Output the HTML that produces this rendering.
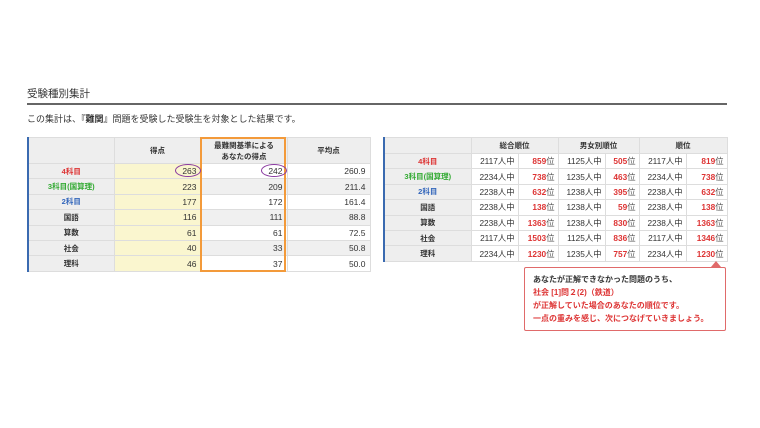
<!DOCTYPE html><html><head><meta charset="utf-8"><style>
*{margin:0;padding:0;box-sizing:border-box}
body{width:760px;height:428px;background:#fff;font-family:"Liberation Sans","Noto Sans CJK JP",sans-serif;color:#333;position:relative;overflow:hidden}
.t{position:absolute;left:27px;top:86px;font-size:10.5px;color:#333}
.ln{position:absolute;left:27px;top:103px;width:700px;height:2px;background:#666}
.s{position:absolute;left:27px;top:112px;font-size:9px}
table{position:absolute;border-collapse:collapse;font-size:8.5px;table-layout:fixed}
td{border:1px solid #ddd;height:15.4px;text-align:right;padding:0 4px}
th{border:1px solid #ddd;background:#eee;font-weight:bold;font-size:7.5px;text-align:center}
td.l{background:#eee;text-align:center;font-weight:bold;font-size:7.5px}
.r{color:#d33}.g{color:#3a3}.b{color:#36b}
#A{left:27px;top:137px;width:342px;border-left:2px solid #3a6ab0}
#A td.y{background:#faf6cf}
#A tr.z td:not(.l):not(.y){background:#f0f0f0}
#B{left:383px;top:137px;width:343px;border-left:2px solid #3a6ab0}
#B th{height:16px}
#B td{font-size:8.3px;padding:0 3px}
#B td.l{font-size:7.5px}
#B td.n{color:#d33;font-weight:bold}
#B td.n span{color:#555;font-weight:normal}
.ob{position:absolute;left:200px;top:137px;width:86px;height:135px;border:2px solid #f39a3a}
.ov{position:absolute;width:26px;height:13px;border:1.5px solid #8a3aa0;border-radius:50%}
.c{position:absolute;left:524px;top:267px;width:202px;height:64px;border:1px solid #e06a6a;border-radius:2px;font-size:8px;line-height:13px;padding:5px 0 0 8px;font-weight:bold;color:#d33;background:#fff}
.ar{position:absolute;left:711px;top:261px;width:0;height:0;border-left:5px solid transparent;border-right:5px solid transparent;border-bottom:6px solid #e06a6a}
</style></head><body>
<div class="t">受験種別集計</div><div class="ln"></div>
<div class="s">この集計は、<b>『難関』</b>問題を受験した受験生を対象とした結果です。</div>
<table id="A"><colgroup><col style="width:86px"><col style="width:87px"><col style="width:86px"><col style="width:83px"></colgroup>
<tr><th style="height:26px"></th><th>得点</th><th>最難関基準による<br>あなたの得点</th><th>平均点</th></tr>
<tr><td class="l r">4科目</td><td class="y">263</td><td>242</td><td>260.9</td></tr>
<tr class="z"><td class="l g">3科目(国算理)</td><td class="y">223</td><td>209</td><td>211.4</td></tr>
<tr><td class="l b">2科目</td><td class="y">177</td><td>172</td><td>161.4</td></tr>
<tr class="z"><td class="l">国語</td><td class="y">116</td><td>111</td><td>88.8</td></tr>
<tr><td class="l">算数</td><td class="y">61</td><td>61</td><td>72.5</td></tr>
<tr class="z"><td class="l">社会</td><td class="y">40</td><td>33</td><td>50.8</td></tr>
<tr><td class="l">理科</td><td class="y">46</td><td>37</td><td>50.0</td></tr>
</table>
<div class="ob"></div>
<div class="ov" style="left:175px;top:164px"></div>
<div class="ov" style="left:261px;top:164px"></div>
<table id="B"><colgroup><col style="width:87px"><col style="width:47px"><col style="width:40px"><col style="width:47px"><col style="width:34px"><col style="width:47px"><col style="width:41px"></colgroup>
<tr><th></th><th colspan="2">総合順位</th><th colspan="2">男女別順位</th><th colspan="2">順位</th></tr>
<tr><td class="l r">4科目</td><td>2117人中</td><td class="n">859<span>位</span></td><td>1125人中</td><td class="n">505<span>位</span></td><td>2117人中</td><td class="n">819<span>位</span></td></tr>
<tr><td class="l g">3科目(国算理)</td><td>2234人中</td><td class="n">738<span>位</span></td><td>1235人中</td><td class="n">463<span>位</span></td><td>2234人中</td><td class="n">738<span>位</span></td></tr>
<tr><td class="l b">2科目</td><td>2238人中</td><td class="n">632<span>位</span></td><td>1238人中</td><td class="n">395<span>位</span></td><td>2238人中</td><td class="n">632<span>位</span></td></tr>
<tr><td class="l">国語</td><td>2238人中</td><td class="n">138<span>位</span></td><td>1238人中</td><td class="n">59<span>位</span></td><td>2238人中</td><td class="n">138<span>位</span></td></tr>
<tr><td class="l">算数</td><td>2238人中</td><td class="n">1363<span>位</span></td><td>1238人中</td><td class="n">830<span>位</span></td><td>2238人中</td><td class="n">1363<span>位</span></td></tr>
<tr><td class="l">社会</td><td>2117人中</td><td class="n">1503<span>位</span></td><td>1125人中</td><td class="n">836<span>位</span></td><td>2117人中</td><td class="n">1346<span>位</span></td></tr>
<tr><td class="l">理科</td><td>2234人中</td><td class="n">1230<span>位</span></td><td>1235人中</td><td class="n">757<span>位</span></td><td>2234人中</td><td class="n">1230<span>位</span></td></tr>
</table>
<div class="ar"></div>
<div class="c"><span style="color:#333">あなたが正解できなかった問題のうち、</span><br>社会 [1]問２(2)（鉄道）<br>が正解していた場合のあなたの順位です。<br>一点の重みを感じ、次につなげていきましょう。</div>
</body></html>
